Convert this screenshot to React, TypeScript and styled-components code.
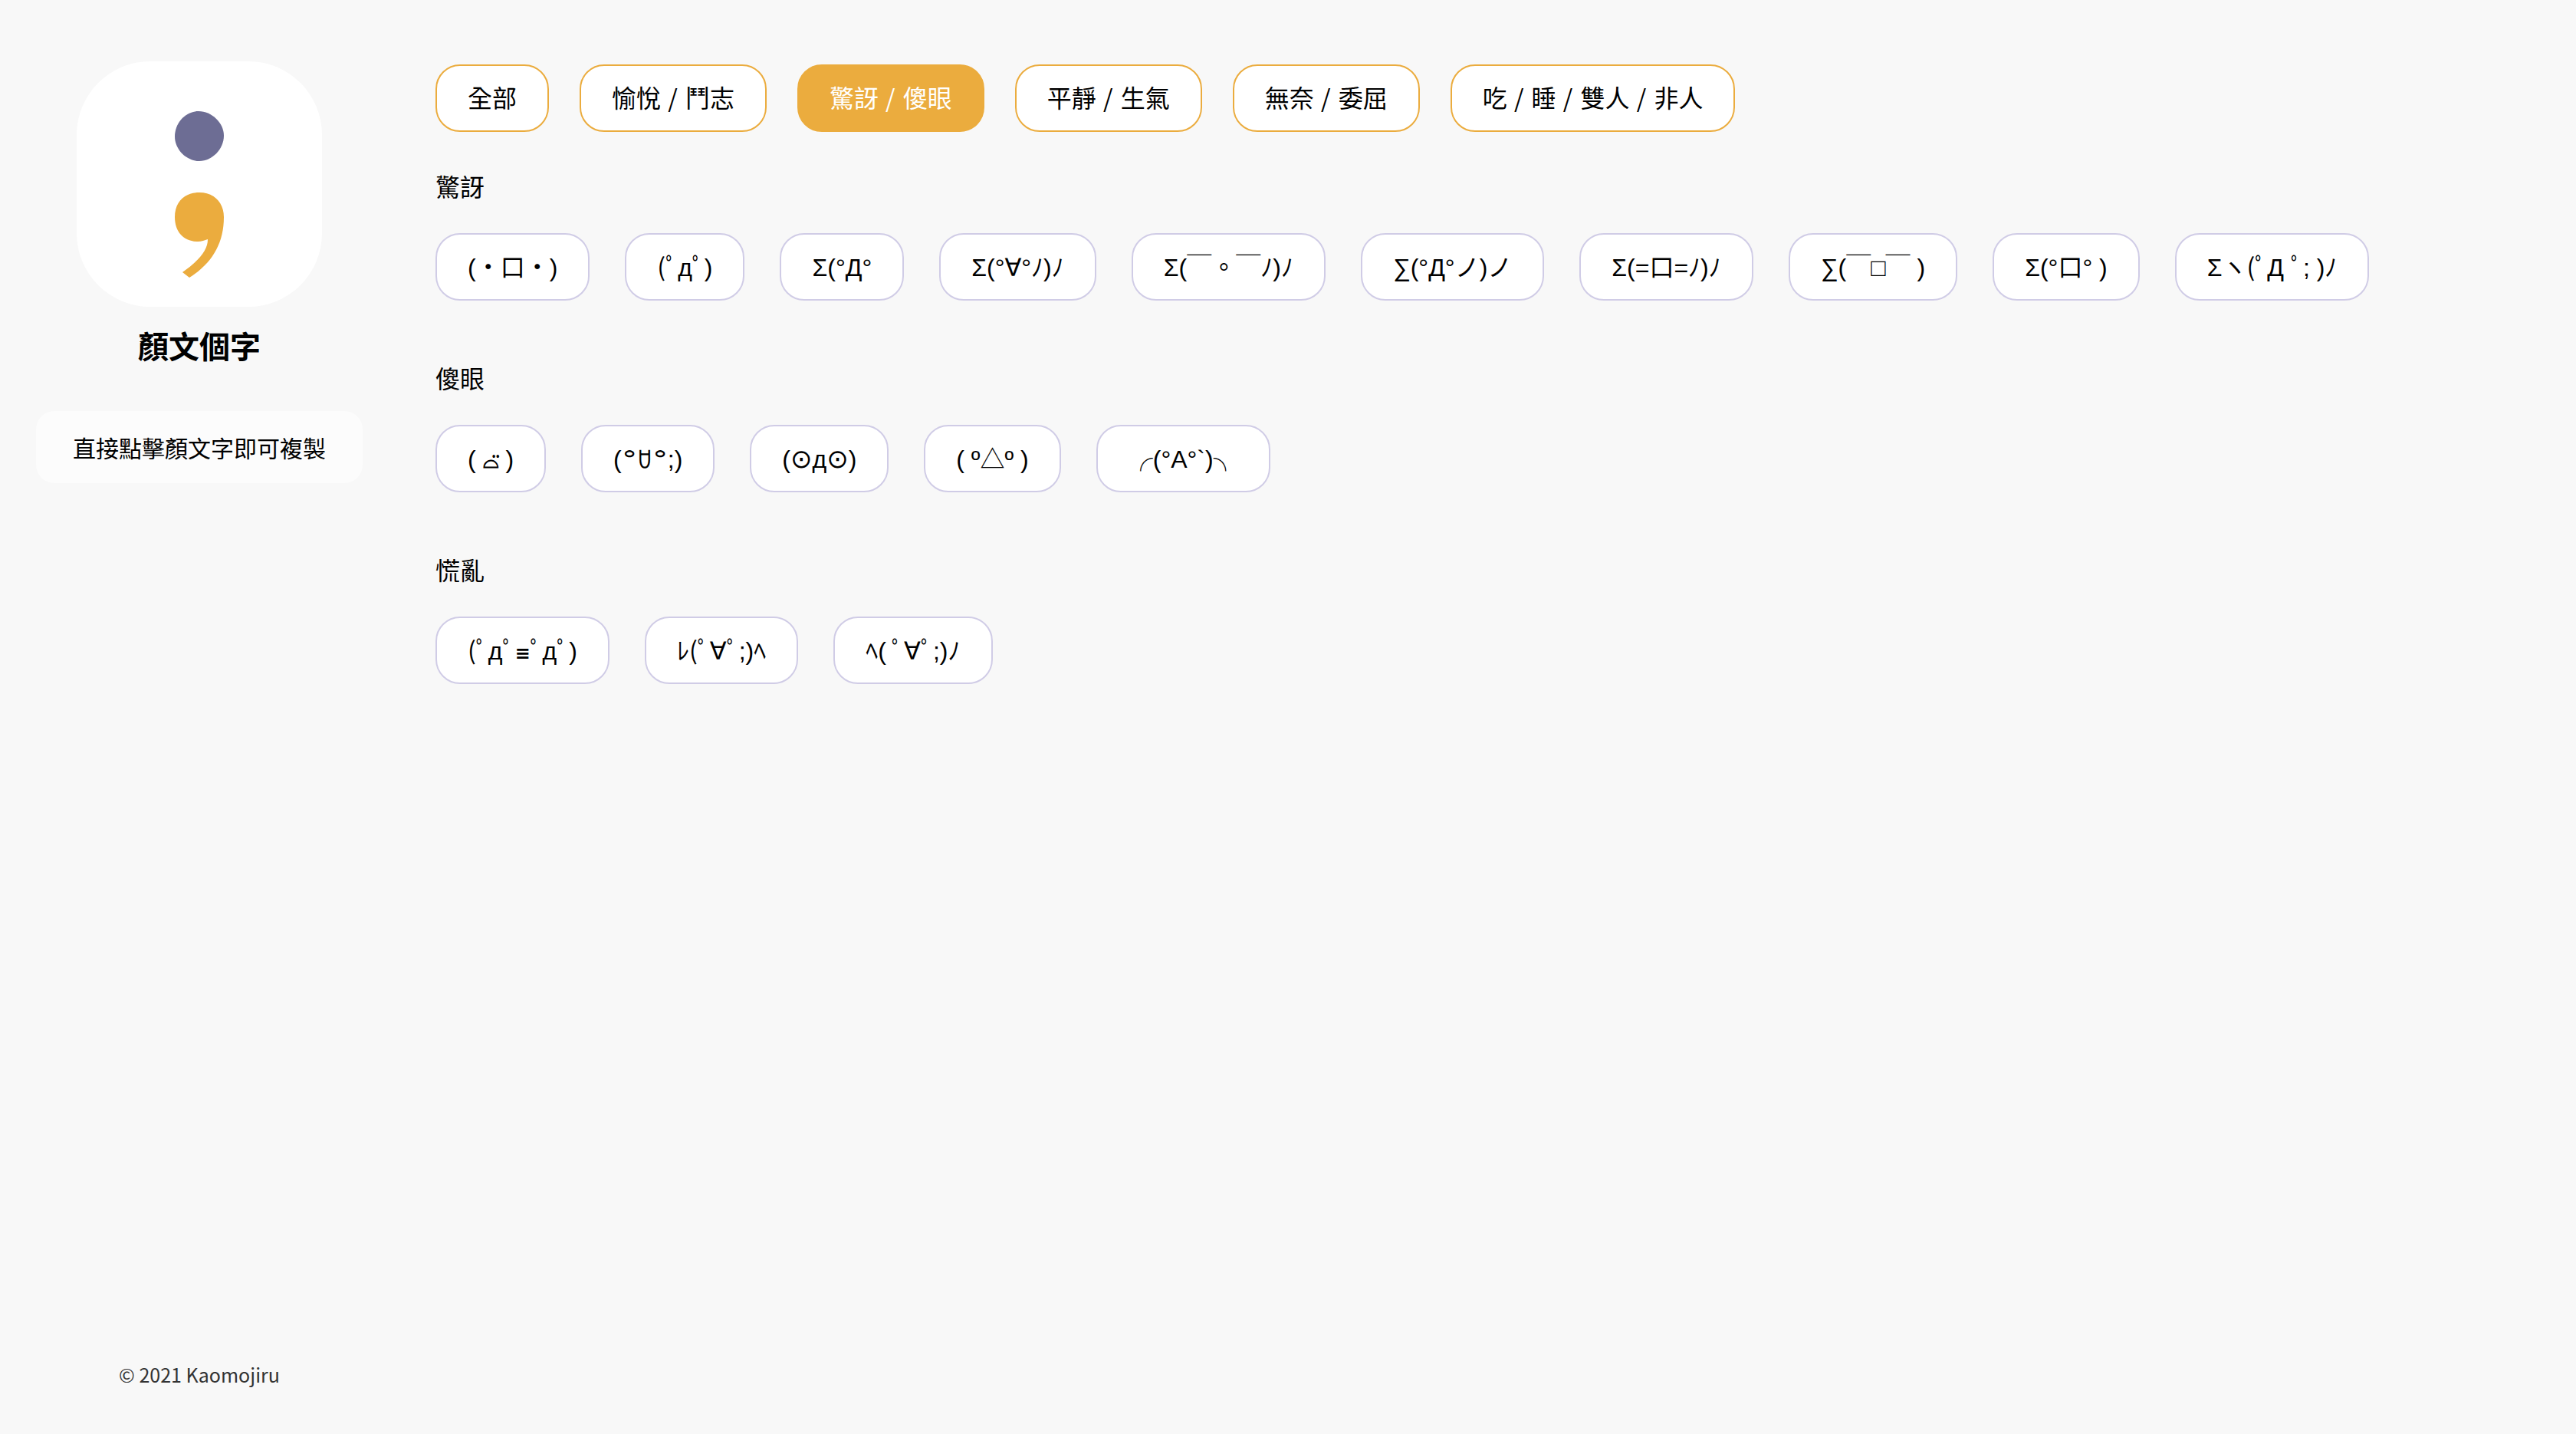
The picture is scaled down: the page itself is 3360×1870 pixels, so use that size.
import React, { useState } from "react";
import styled, { createGlobalStyle } from "styled-components";

const GlobalStyle = createGlobalStyle`
  *, *::before, *::after { box-sizing: border-box; }
  body {
    margin: 0;
    background: #f8f8f8;
    color: #000;
    font-family: "Noto Sans CJK TC", "Noto Sans", "DejaVu Sans", sans-serif;
    font-size: 32px;
    font-weight: 400;
    line-height: 48px;
  }
`;

const Page = styled.div`
  display: flex;
  min-height: 100vh;
`;

const Sidebar = styled.aside`
  flex: 0 0 520px;
  display: flex;
  flex-direction: column;
  align-items: center;
  padding: 80px 40px 58px;
`;

const Logo = styled.svg`
  display: block;
  width: 320px;
  height: 320px;
  border-radius: 96px;
  background: #fff;
`;

const Title = styled.h1`
  margin: 20px 0 56px;
  font-size: 40px;
  font-weight: 700;
  line-height: 60px;
`;

const Hint = styled.p`
  margin: 0;
  padding: 24px 48px;
  border-radius: 24px;
  background: #fcfcfc;
  font-size: 30px;
  line-height: 46px;
  white-space: nowrap;
`;

const Copyright = styled.footer`
  margin-top: auto;
  color: #333;
  font-size: 25px;
  line-height: 40px;
`;

const Main = styled.main`
  flex: 1;
  min-width: 0;
  padding: 84px 48px;
`;

const Tabs = styled.nav`
  display: flex;
  flex-wrap: wrap;
  gap: 40px;
  margin-bottom: 46px;
`;

const Pill = styled.button`
  height: 88px;
  padding: 0 40px;
  border: 2px solid #d0cce6;
  border-radius: 32px;
  background: #fff;
  color: #000;
  font: inherit;
  white-space: pre;
  cursor: pointer;
`;

const Tab = styled(Pill)<{ $active: boolean }>`
  padding-bottom: 4px;
  border-color: #ebac3e;
  background: ${(p) => (p.$active ? "#ebac3e" : "#fff")};
  color: ${(p) => (p.$active ? "#fff" : "#000")};
`;

const Slash = styled.span`
  padding: 0 3px 0 2px;
`;

const Face = styled(Pill)`
  padding-top: 2px;
  font-family: "Liberation Sans", "Noto Sans CJK TC", "DejaVu Sans", sans-serif;
`;

const Symbol = styled.span<{ $size: number }>`
  font-family: "DejaVu Sans", sans-serif;
  font-size: ${(p) => p.$size}px;
  font-weight: ${(p) => (p.$size < 32 ? 700 : 400)};
  line-height: 0;
`;

const Section = styled.section`
  margin-bottom: 76px;
`;

const Heading = styled.h2`
  margin: 0 0 38px;
  font-size: 32px;
  font-weight: 400;
  line-height: 48px;
`;

const Faces = styled.div`
  display: flex;
  flex-wrap: wrap;
  gap: 46px;
`;

const tabs = ["全部", "愉悅 / 鬥志", "驚訝 / 傻眼", "平靜 / 生氣", "無奈 / 委屈", "吃 / 睡 / 雙人 / 非人"];

const symbolSizes: Record<string, number> = { "∀": 32, "⊙": 34, "≡": 24, "⌓̈": 26, "꒪ꇴ꒪": 26 };

const sections = [
  {
    name: "驚訝",
    faces: ["(・口・)", "(ﾟдﾟ)", "Σ(°Д°", "Σ(°∀°ﾉ)ﾉ", "Σ(￣。￣ﾉ)ﾉ", "∑(°Д°ノ)ノ", "Σ(=口=ﾉ)ﾉ", "∑(￣□￣ )", "Σ(°口° )", "Σヽ(ﾟД ﾟ; )ﾉ"],
  },
  { name: "傻眼", faces: ["( ⌓̈ )", "(꒪ꇴ꒪;)", "(⊙д⊙)", "( º△º )", "╭(°A°`)╮"] },
  { name: "慌亂", faces: ["(ﾟдﾟ≡ﾟдﾟ)", "ﾚ(ﾟ∀ﾟ;)ﾍ", "ﾍ( ﾟ∀ﾟ;)ﾉ"] },
];

export default function App() {
  const [active, setActive] = useState(2);
  const copy = (text: string) => navigator.clipboard?.writeText(text);
  return (
    <Page lang="zh-Hant">
      <GlobalStyle />
      <Sidebar>
        <Logo viewBox="0 0 320 320" role="img" aria-label="顏文個字">
          <path fill="#6d6d94" d="M159 65C142 65 128 80 128 98C128 115 143 130 160 130C177 130 192 114 192 97C192 80 176 65 159 65Z" />
          <path fill="#ebac3e" d="M160 171C141 171 128 183 128 203C128 223 140 235 158 235C163 235 167 233 171 232C171 247 159 260 138 275L147 282C176 264 192 238 192 203C192 184 179 171 160 171Z" />
        </Logo>
        <Title>顏文個字</Title>
        <Hint>直接點擊顏文字即可複製</Hint>
        <Copyright>© 2021 Kaomojiru</Copyright>
      </Sidebar>
      <Main>
        <Tabs>
          {tabs.map((t, i) => (
            <Tab key={t} type="button" $active={i === active} onClick={() => setActive(i)}>
              {t.split(/( \/ )/).map((part, n) => (n % 2 ? <Slash key={n}>{part}</Slash> : part))}
            </Tab>
          ))}
        </Tabs>
        {sections.map((s) => (
          <Section key={s.name}>
            <Heading>{s.name}</Heading>
            <Faces>
              {s.faces.map((f) => (
                <Face key={f} type="button" onClick={() => copy(f)}>
                  {f.split(/([∀⊙≡]|⌓̈|꒪ꇴ꒪)/).map((part, n) =>
                    n % 2 ? (
                      <Symbol key={n} $size={symbolSizes[part] ?? 32}>
                        {part}
                      </Symbol>
                    ) : (
                      part
                    ),
                  )}
                </Face>
              ))}
            </Faces>
          </Section>
        ))}
      </Main>
    </Page>
  );
}
